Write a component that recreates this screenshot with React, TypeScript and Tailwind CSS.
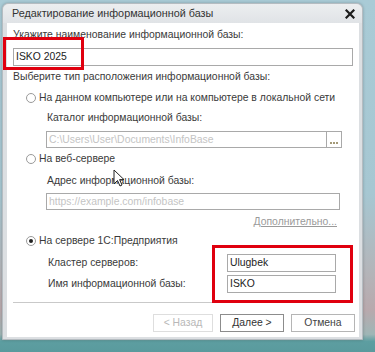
import React from 'react';

const font = { fontFamily: '"Liberation Sans", Arial, sans-serif' };

const Radio: React.FC<{ checked?: boolean; label: string }> = ({ checked, label }) => (
  <div className="flex items-center h-[14px] pl-[19px]">
    <span className="w-[10px] h-[10px] rounded-full border border-[#9a9a9a] bg-white flex items-center justify-center">
      {checked && <span className="w-[4px] h-[4px] rounded-full bg-[#222]" />}
    </span>
    <span className="ml-[3px]">{label}</span>
  </div>
);

const Field: React.FC<{ value?: string; placeholder?: string; className?: string }> = ({
  value,
  placeholder,
  className,
}) => (
  <div className={`border border-[#a9a9a9] bg-white flex items-center px-[2px] ${className ?? ''}`}>
    {value ? (
      <span className="text-[#222]">{value}</span>
    ) : (
      <span className="text-[#c4c4c4]">{placeholder}</span>
    )}
  </div>
);

export default function App() {
  return (
    <div
      className="relative w-[375px] h-[352px] overflow-hidden pl-[2px] pt-[3px] bg-[linear-gradient(180deg,#a9cbd6_0%,#a6c7d2_55%,#b4b4b8_78%,#b9a9ad_88%,#9fb6b6_95%,#5d9ea1_97%,#5a9a9d_100%)] text-[10.4px] text-[#3a3a3a]"
      style={font}
    >
      <div className="w-[361px] h-[337px] flex flex-col bg-[#dcdfe2] rounded-t-[6px] border border-[#b5bcc1] shadow-[0_0_3px_rgba(0,0,0,0.25)]">
        {/* заголовок */}
        <div className="h-[19px] flex items-center justify-between pl-[9px] pr-[7px] bg-[linear-gradient(180deg,#eceef0,#e0e3e6)] rounded-t-[6px]">
          <span className="text-[10.8px] text-[#333]">Редактирование информационной базы</span>
          <svg width="10" height="10" viewBox="0 0 10 10">
            <path d="M1.5 1.5 L8.5 8.5 M8.5 1.5 L1.5 8.5" stroke="#1c1c1c" strokeWidth="2.2" strokeLinecap="square" />
          </svg>
        </div>

        {/* содержимое */}
        <div className="flex-1 ml-[4px] mr-[3px] mb-[2px] bg-white flex flex-col">
          <div className="mt-[5px] h-[14px] leading-[14px] pl-[6px]">Укажите наименование информационной базы:</div>
          <Field value="ISKO 2025" className="mt-[6px] ml-[6px] w-[340px] h-[18px]" />
          <div className="mt-[4px] h-[14px] leading-[14px] pl-[6px]">Выберите тип расположения информационной базы:</div>

          <div className="mt-[7px]">
            <Radio label="На данном компьютере или на компьютере в локальной сети" />
          </div>
          <div className="mt-[6px] h-[14px] leading-[14px] pl-[40px]">Каталог информационной базы:</div>
          <div className="mt-[6px] ml-[39px] w-[296px] h-[17px] border border-[#a9a9a9] flex">
            <div className="flex-1 flex items-center px-[2px] text-[#c4c4c4]">C:\Users\User\Documents\InfoBase</div>
            <div className="w-[15px] border-l border-[#a9a9a9] flex items-end justify-center pb-[3px] gap-[1px]">
              <span className="w-[2px] h-[2px] bg-[#a49a78]" />
              <span className="w-[2px] h-[2px] bg-[#a49a78]" />
              <span className="w-[2px] h-[2px] bg-[#a49a78]" />
            </div>
          </div>

          <div className="mt-[4px]">
            <Radio label="На веб-сервере" />
          </div>
          <div className="mt-[8px] h-[14px] leading-[14px] pl-[40px]">Адрес информационной базы:</div>
          <Field placeholder="https://example.com/infobase" className="mt-[5px] ml-[39px] w-[294px] h-[17px]" />
          <div className="mt-[5px] h-[14px] leading-[14px] flex justify-end pr-[22px]">
            <span className="text-[#9a9a9a] underline">Дополнительно...</span>
          </div>

          <div className="mt-[5px]">
            <Radio checked label="На сервере 1С:Предприятия" />
          </div>
          <div className="mt-[6px] h-[18px] flex items-center pl-[41px]">
            <span className="w-[179px]">Кластер серверов:</span>
            <Field value="Ulugbek" className="w-[109px] h-[18px]" />
          </div>
          <div className="mt-[3px] h-[18px] flex items-center pl-[41px]">
            <span className="w-[179px]">Имя информационной базы:</span>
            <Field value="ISKO" className="w-[109px] h-[18px]" />
          </div>

          <div className="mt-[9px] mx-[6px] h-px bg-[#c9c9c9]" />

          <div className="mt-[11px] flex justify-end gap-[7px] pr-[4px]">
            <button className="w-[60px] h-[18px] border border-[#dedede] text-[#b8b8b8] bg-white">&lt; Назад</button>
            <button className="w-[64px] h-[18px] border border-[#8c8c8c] text-[#333] bg-white">Далее &gt;</button>
            <button className="w-[64px] h-[18px] border border-[#b5b5b5] text-[#444] bg-white">Отмена</button>
          </div>
        </div>
      </div>

      {/* красные рамки */}
      <div className="absolute left-[3px] top-[37px] w-[81px] h-[33px] border-[3px] border-[#e0000f]" />
      <div className="absolute left-[212px] top-[245px] w-[141px] h-[58px] border-[3px] border-[#e0000f]" />

      {/* курсор */}
      <svg className="absolute left-[113px] top-[169px]" width="12" height="19" viewBox="0 0 12 19">
        <path d="M1 1 L1 15 L4.5 11.5 L7 17 L9 16 L6.6 10.6 L11 10.6 Z" fill="#fff" stroke="#222" strokeWidth="1" strokeLinejoin="round" />
      </svg>
    </div>
  );
}
